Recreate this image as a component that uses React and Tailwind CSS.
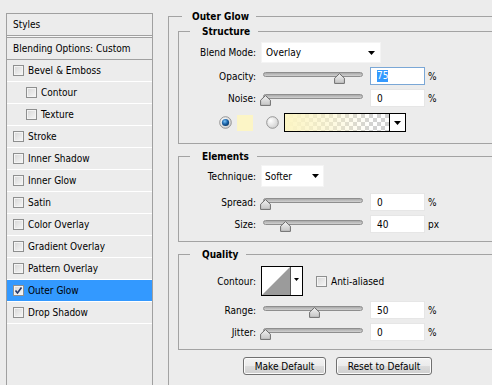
import React from "react";

const FONT = "font-['DejaVu_Sans_Condensed','Liberation_Sans',sans-serif]";

function Check({ checked }) {
  return (
    <span className="w-[11px] h-[11px] shrink-0 border border-[#8e8f8f] bg-[image:linear-gradient(135deg,#d6d6d6,#f7f7f7)] shadow-[inset_0_0_0_1px_#f4f4f4] flex items-center justify-center">
      {checked && (
        <svg width="9" height="9" viewBox="0 0 9 9">
          <path d="M1.5 4.5 L3.5 7 L7.5 1.5" fill="none" stroke="#24386a" strokeWidth="1.6" />
        </svg>
      )}
    </span>
  );
}

function Radio({ on }) {
  return (
    <svg width="13" height="13" viewBox="0 0 13 13" className="shrink-0">
      <defs>
        <radialGradient id="rg-off" cx="0.35" cy="0.35" r="0.8">
          <stop offset="0" stopColor="#ffffff" />
          <stop offset="1" stopColor="#c9c9c9" />
        </radialGradient>
        <radialGradient id="rg-on" cx="0.4" cy="0.35" r="0.7">
          <stop offset="0" stopColor="#7cc4f8" />
          <stop offset="0.55" stopColor="#1a62a8" />
          <stop offset="1" stopColor="#0b355f" />
        </radialGradient>
      </defs>
      <circle cx="6.5" cy="6.5" r="5.8" fill="url(#rg-off)" stroke="#8c8c8c" strokeWidth="0.9" />
      {on && <circle cx="6.5" cy="6.5" r="3.6" fill="url(#rg-on)" />}
    </svg>
  );
}

function Arrow() {
  return (
    <svg width="7" height="4" viewBox="0 0 7 4" className="shrink-0">
      <path d="M0 0 H7 L3.5 4 Z" fill="#000" />
    </svg>
  );
}

function Thumb() {
  return (
    <svg width="11" height="11" viewBox="0 0 11 11">
      <defs>
        <linearGradient id="tg" x1="0" y1="0" x2="0" y2="1">
          <stop offset="0" stopColor="#f2f2f2" />
          <stop offset="1" stopColor="#c4c4c4" />
        </linearGradient>
      </defs>
      <path d="M5.5 0.6 L10.4 5.2 L10.4 10.4 L0.6 10.4 L0.6 5.2 Z" fill="url(#tg)" stroke="#6e6e6e" strokeWidth="1" />
    </svg>
  );
}

function Slider({ value }) {
  return (
    <div className="relative ml-[3px] w-[108px] h-[18px] shrink-0">
      <div className="absolute left-[4px] top-[5px] w-[100px] h-[5px] rounded-full border border-[#8e8e8e] bg-[image:linear-gradient(#a9a9a9,#d2d2d2)]" />
      <div className="absolute top-[6px]" style={{ left: Math.round(value * 0.98) + 1 }}>
        <Thumb />
      </div>
    </div>
  );
}

function Label({ children }) {
  return <div className="w-[77px] shrink-0 text-right">{children}</div>;
}

function NumRow({ label, value, slider, unit, focused, className }) {
  return (
    <div className={"flex items-center h-[18px] " + className}>
      <Label>{label}</Label>
      <Slider value={slider} />
      <div
        className={
          "ml-[3px] w-[55px] h-[18px] bg-white border flex items-center pl-[6px] shrink-0 " +
          (focused ? "border-[#7aa7d6]" : "border-[#e6e6e6]")
        }
      >
        {focused ? <span className="bg-[#3399ff] text-white leading-[12px]">{value}</span> : value}
      </div>
      <div className="ml-[3px]">{unit}</div>
    </div>
  );
}

function Group({ title, className, children }) {
  return (
    <fieldset className={"border-l border-t border-b border-[#a3a3a3] min-w-0 " + className}>
      <legend className="ml-[11px] pl-[12px] pr-[8px] font-bold leading-[13px]">{title}</legend>
      {children}
    </fieldset>
  );
}

const styles = [
  { label: "Bevel & Emboss" },
  { label: "Contour", indent: true },
  { label: "Texture", indent: true },
  { label: "Stroke" },
  { label: "Inner Shadow" },
  { label: "Inner Glow" },
  { label: "Satin" },
  { label: "Color Overlay" },
  { label: "Gradient Overlay" },
  { label: "Pattern Overlay" },
  { label: "Outer Glow", checked: true },
  { label: "Drop Shadow" },
];

export default function App() {
  return (
    <div className={"w-[492px] h-[385px] bg-[#ececec] flex overflow-hidden text-[10px] text-black " + FONT}>
      {/* left list */}
      <div className="ml-[6px] mt-[13px] w-[147px] shrink-0 border-l border-t border-r border-[#a0a0a0] flex flex-col">
        <div className="h-[22px] border-b border-[#a0a0a0] flex items-center pl-[6px]">Styles</div>
        <div className="h-px bg-[#f7f7f7]" />
        <div className="h-[23px] border-t border-b border-[#a0a0a0] flex items-center pl-[6px]">
          Blending Options: Custom
        </div>
        {styles.map((s) => (
          <div
            key={s.label}
            className={
              "h-[22px] border-b border-white flex items-center " +
              (s.indent ? "pl-[19px] " : "pl-[6px] ") +
              (s.checked ? "bg-[#3399ff]" : "")
            }
          >
            <Check checked={s.checked} />
            <span className="ml-[4px]">{s.label}</span>
          </div>
        ))}
      </div>

      {/* right side */}
      <div className="ml-[15px] flex-1 min-w-0">
        <fieldset className="mt-[10px] border-l border-t border-[#a3a3a3] min-w-0">
          <legend className="ml-[13px] pl-[10px] pr-[7px] font-bold leading-[13px]">Outer Glow</legend>
          <div className="pl-[9px] pb-[20px]">
            <Group title="Structure" className="mt-[2px]">
              <div className="pb-[11px]">
                <div className="flex items-center h-[21px] mt-[4px]">
                  <Label>Blend Mode:</Label>
                  <div className="ml-[5px] w-[120px] h-[21px] bg-white border border-[#f4f4f4] flex items-center justify-between pl-[4px] pr-[5px]">
                    <span>Overlay</span>
                    <Arrow />
                  </div>
                </div>
                <NumRow label="Opacity:" value="75" slider={75} unit="%" focused className="mt-[4px]" />
                <NumRow label="Noise:" value="0" slider={0} unit="%" className="mt-[4px]" />
                <div className="flex items-center h-[19px] mt-[6px] pl-[40px]">
                  <Radio on />
                  <div className="ml-[5px] w-[16px] h-[16px] bg-[#fcf5c6]" />
                  <div className="ml-[13px]">
                    <Radio />
                  </div>
                  <div className="ml-[5px] w-[122px] h-[19px] border border-black flex">
                    <div className="flex-1 bg-[image:linear-gradient(to_right,#fcf5c4,rgba(252,245,196,0.55)_45%,rgba(252,245,196,0)_85%),repeating-conic-gradient(#d2d2d2_0%_25%,#ffffff_0%_50%)] bg-[length:100%_100%,8px_8px]" />
                    <div className="w-[16px] border-l border-black bg-white flex items-center justify-center">
                      <Arrow />
                    </div>
                  </div>
                </div>
              </div>
            </Group>

            <Group title="Elements" className="mt-[6px]">
              <div className="pb-[8px]">
                <div className="flex items-center h-[22px] mt-[2px]">
                  <Label>Technique:</Label>
                  <div className="ml-[5px] w-[63px] h-[22px] bg-white border border-[#f4f4f4] flex items-center justify-between pl-[3px] pr-[4px]">
                    <span>Softer</span>
                    <Arrow />
                  </div>
                </div>
                <NumRow label="Spread:" value="0" slider={0} unit="%" className="mt-[6px]" />
                <NumRow label="Size:" value="40" slider={20} unit="px" className="mt-[4px]" />
              </div>
            </Group>

            <Group title="Quality" className="mt-[6px]">
              <div className="pb-[8px]">
                <div className="flex items-center h-[30px] mt-[5px]">
                  <Label>Contour:</Label>
                  <div className="ml-[5px] w-[42px] h-[30px] border border-black bg-white flex shrink-0">
                    <svg width="28" height="28" viewBox="0 0 28 28" className="shrink-0">
                      <path d="M0 28 L28 0 L28 28 Z" fill="#9b9b9b" />
                    </svg>
                    <div className="flex-1 border-l border-[#555] flex items-start justify-center pt-[11px]">
                      <svg width="5" height="3" viewBox="0 0 5 3">
                        <path d="M0 0 H5 L2.5 3 Z" fill="#000" />
                      </svg>
                    </div>
                  </div>
                  <div className="ml-[13px]">
                    <Check />
                  </div>
                  <span className="ml-[4px]">Anti-aliased</span>
                </div>
                <NumRow label="Range:" value="50" slider={50} unit="%" className="mt-[5px]" />
                <NumRow label="Jitter:" value="0" slider={0} unit="%" className="mt-[4px]" />
              </div>
            </Group>

            <div className="flex mt-[7px]">
              <button className="ml-[65px] w-[83px] h-[18px] border border-[#707070] rounded-[3px] bg-[image:linear-gradient(#f3f3f3,#ebebeb_50%,#dcdcdc_50%,#cfcfcf)] shadow-[inset_0_0_0_1px_#fbfbfb] flex items-center justify-center">
                Make Default
              </button>
              <button className="ml-[10px] w-[96px] h-[18px] border border-[#707070] rounded-[3px] bg-[image:linear-gradient(#f3f3f3,#ebebeb_50%,#dcdcdc_50%,#cfcfcf)] shadow-[inset_0_0_0_1px_#fbfbfb] flex items-center justify-center">
                Reset to Default
              </button>
            </div>
          </div>
        </fieldset>
      </div>
    </div>
  );
}
